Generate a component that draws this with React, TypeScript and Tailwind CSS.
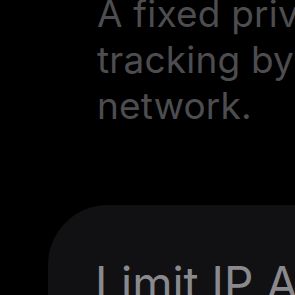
import React from 'react';

const App: React.FC = () => {
  const lines = [
    "A fixed private address helps reduce",
    "tracking by using a unique address for this",
    "network.",
  ];

  return (
    <div className="w-[295px] h-[295px] overflow-hidden bg-black" style={{ fontFamily: 'Inter, "Noto Sans", sans-serif' }}>
      <div className="-mt-[9px] pl-[97px] text-[37px] leading-[46px] text-[#4d4d50] tracking-[0.2px]">
        {lines.map((line) => (
          <div key={line} className="whitespace-nowrap">{line}</div>
        ))}
      </div>

      <div className="mt-[76px] ml-[48px] w-[400px] h-[300px] rounded-[60px] bg-[#111113] pl-[47px] pt-[50px]">
        <div className="whitespace-nowrap text-[46px] leading-[56px] text-[#8a8a8e]">Limit IP Address Tracking</div>
      </div>
    </div>
  );
};

export default App;
